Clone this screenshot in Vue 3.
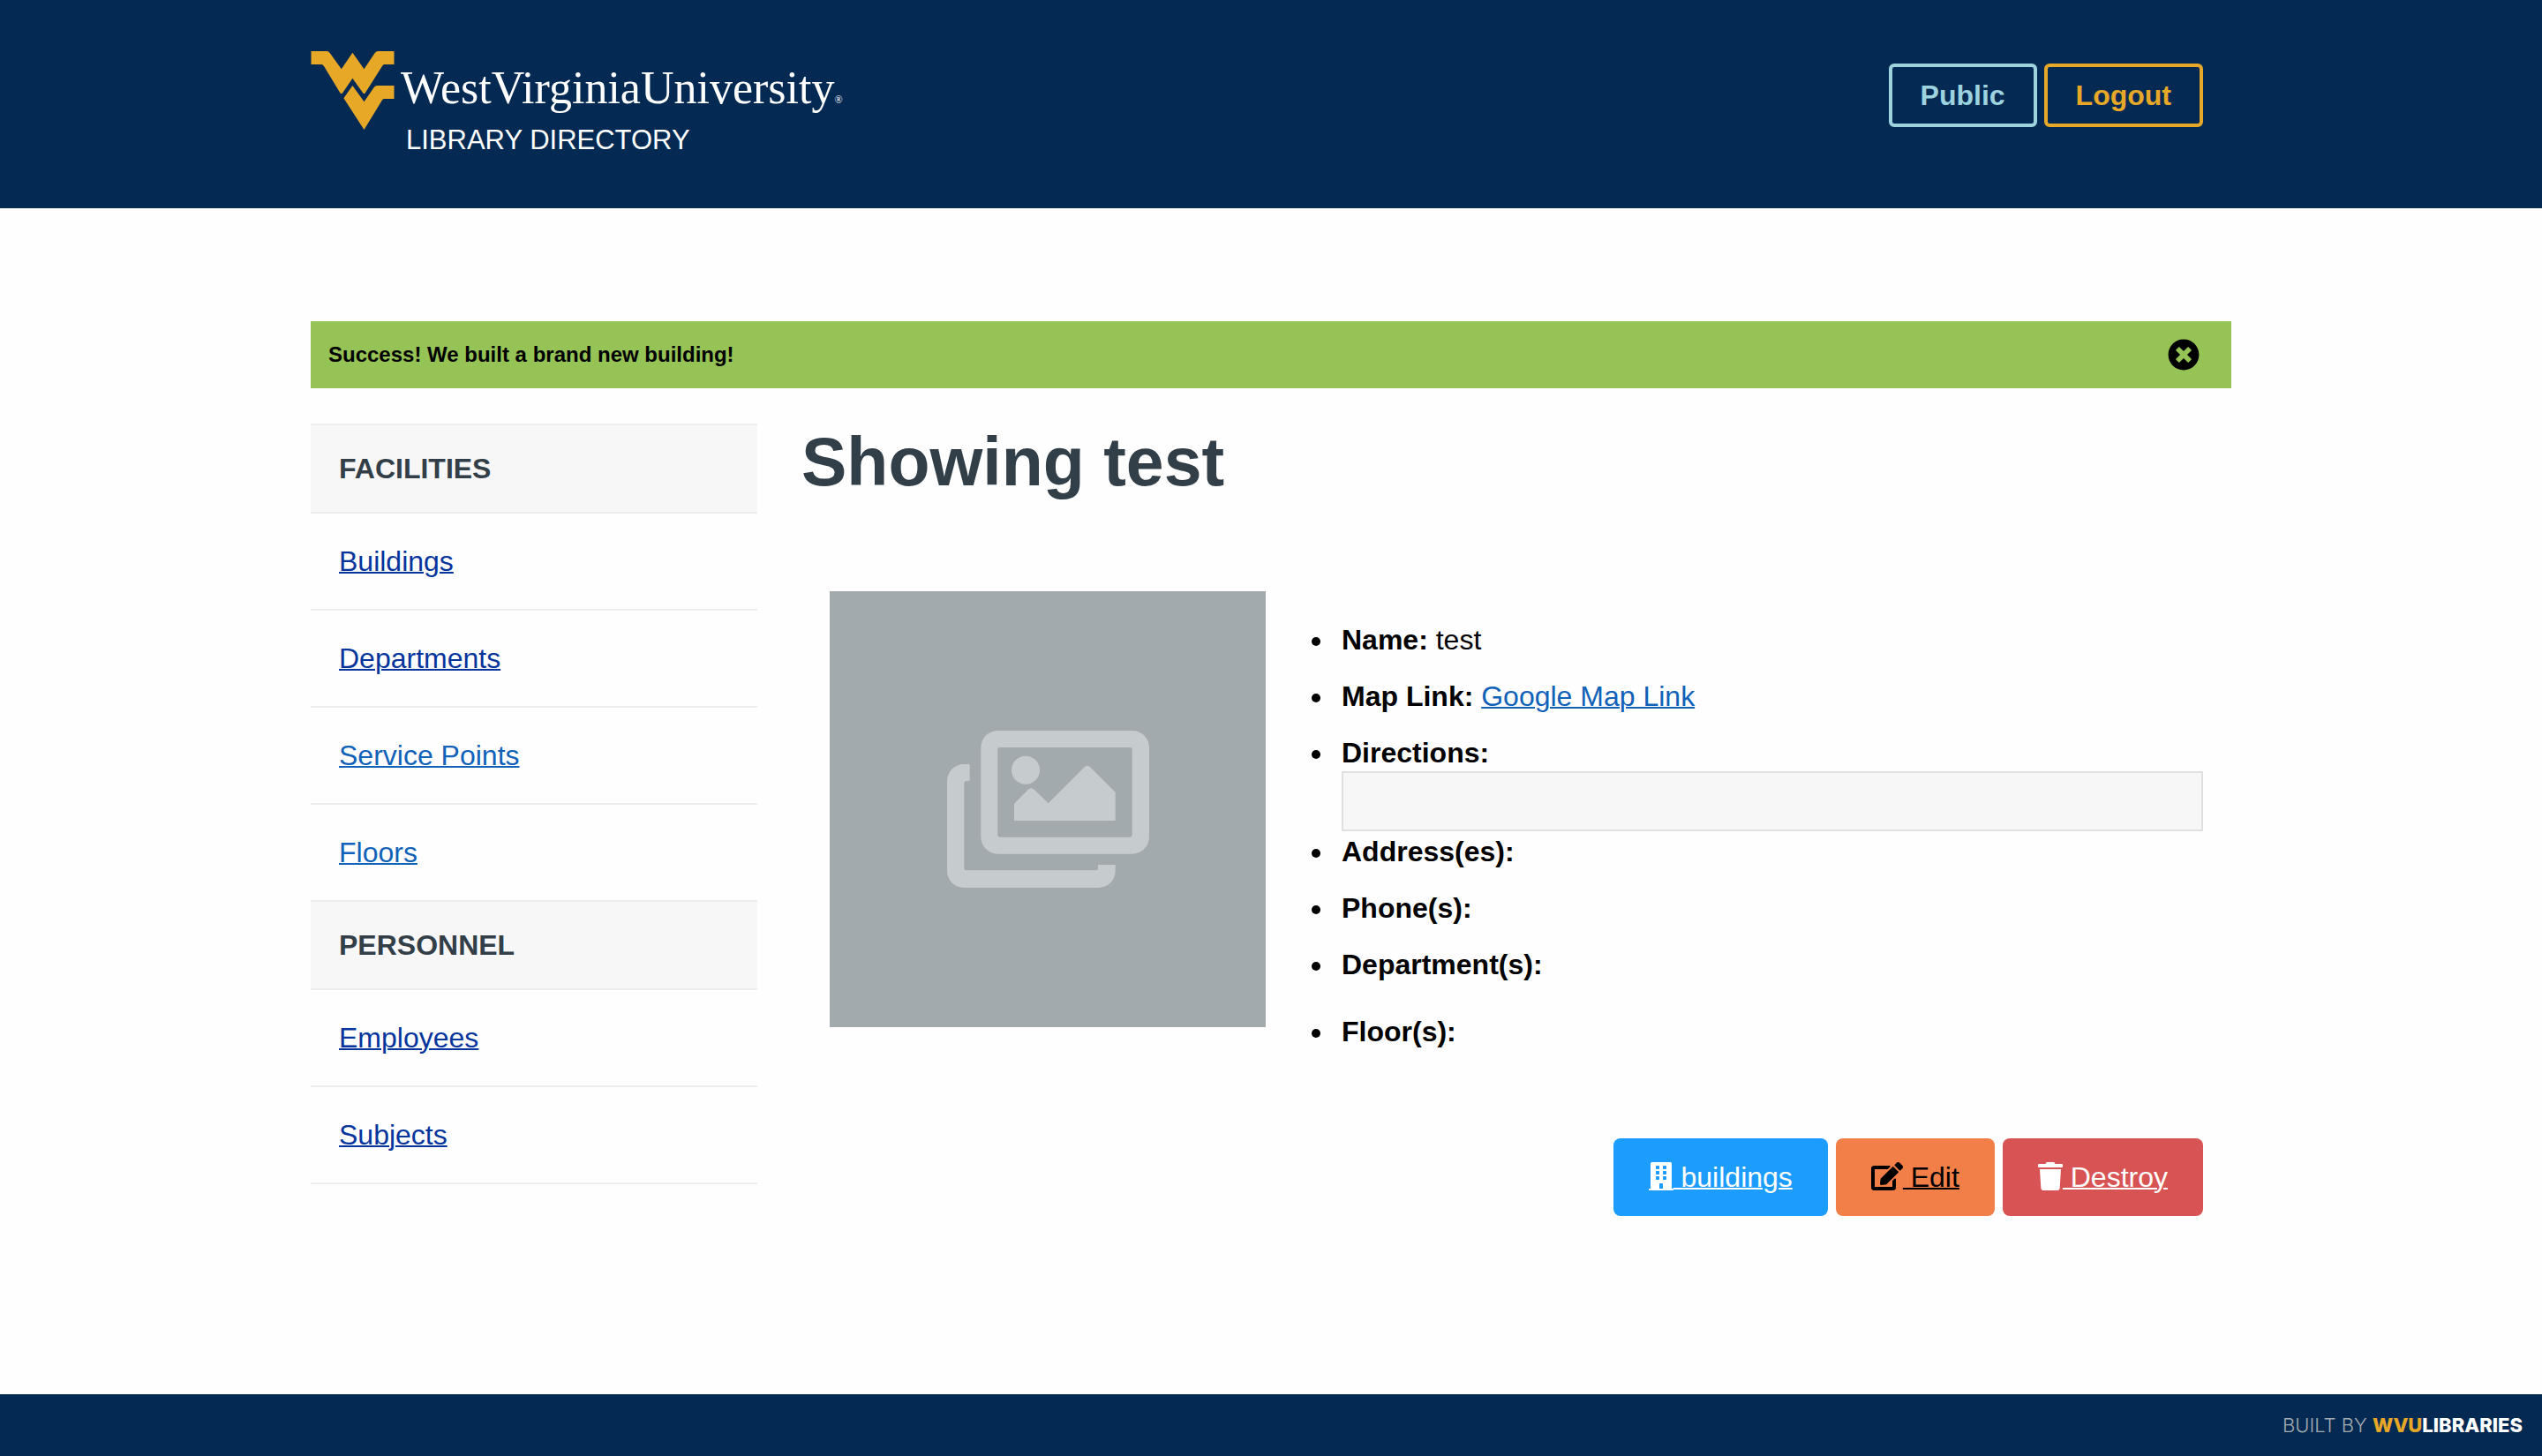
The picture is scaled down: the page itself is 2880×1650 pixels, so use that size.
<script setup>
import { ref } from 'vue'

const showAlert = ref(true)
const directions = ref('')

const sections = [
  {
    title: 'FACILITIES',
    links: [
      { label: 'Buildings', visited: true },
      { label: 'Departments', visited: true },
      { label: 'Service Points', visited: false },
      { label: 'Floors', visited: false }
    ]
  },
  {
    title: 'PERSONNEL',
    links: [
      { label: 'Employees', visited: true },
      { label: 'Subjects', visited: true }
    ]
  }
]

const windowXs = [128, 256]
const windowYs = [64, 160, 256]
</script>

<template>
  <div class="page">
    <header class="masthead">
      <div class="container masthead-inner">
        <a class="brand" href="#">
          <svg class="brand-mark" viewBox="0 0 94 89" aria-hidden="true">
            <path d="M0 0H17.500Q20 0 21.200 2L34.300 20.300 46.900 1.700 60 20.300 72.200 2Q73.500 0 76 0H94V15H83Q81.500 15 80.800 16.500L61.200 47.500Q60 49 58.800 47.500L46.900 30.700 35.500 47.500Q34.300 49 33 47.500L14.500 17Q13.500 15 11.500 15H0Z" />
            <path d="M46.900 39L60 57.300 71.400 40.700Q72.500 39 75 39H94V54H83Q81.500 54 80.600 55.300L60 89 36.900 53.300Z" />
          </svg>
          <span class="brand-text">
            <span class="wordmark">WestVirginiaUniversity<span class="reg">®</span></span>
            <span class="site-name">LIBRARY DIRECTORY</span>
          </span>
        </a>
        <div class="account">
          <button type="button" class="outline public">Public</button>
          <button type="button" class="outline logout">Logout</button>
        </div>
      </div>
    </header>

    <div class="container body">
      <div v-if="showAlert" class="alert" role="status">
        <strong>Success! We built a brand new building!</strong>
        <button type="button" class="close" aria-label="Close" @click="showAlert = false">
          <svg viewBox="0 0 512 512" aria-hidden="true">
            <path d="M256 8C119 8 8 119 8 256s111 248 248 248 248-111 248-248S393 8 256 8zm121.600 313.100c4.700 4.700 4.700 12.300 0 17L338 377.600c-4.700 4.700-12.300 4.700-17 0L256 312l-65.100 65.600c-4.700 4.700-12.300 4.700-17 0L134.400 338c-4.700-4.700-4.700-12.300 0-17l65.600-65-65.600-65.100c-4.700-4.700-4.700-12.300 0-17l39.600-39.600c4.700-4.700 12.300-4.700 17 0l65 65.700 65.100-65.600c4.700-4.700 12.300-4.700 17 0l39.600 39.600c4.700 4.700 4.700 12.300 0 17L312 256l65.600 65.100z" />
          </svg>
        </button>
      </div>

      <div class="columns">
        <nav class="sidebar">
          <section v-for="section in sections" :key="section.title">
            <h2>{{ section.title }}</h2>
            <ul>
              <li v-for="link in section.links" :key="link.label">
                <a href="#" :class="{ visited: link.visited }">{{ link.label }}</a>
              </li>
            </ul>
          </section>
        </nav>

        <main>
          <h1>Showing test</h1>
          <div class="record">
            <div class="photo">
              <svg viewBox="98 84 687 534" aria-hidden="true">
                <path fill-rule="evenodd" d="M270 84H728A57 57 0 0 1 785 141V446A57 57 0 0 1 728 503H270A57 57 0 0 1 213 446V141A57 57 0 0 1 270 84ZM277 141Q270 141 270 148V439Q270 446 277 446H720Q727 446 727 439V148Q727 141 720 141Z" />
                <path d="M175 198V255H163Q156 255 156 262V552Q156 559 163 559H604Q611 559 611 552V540H670V561A57 57 0 0 1 613 618H155A57 57 0 0 1 98 561V255A57 57 0 0 1 155 198Z" />
                <circle cx="365" cy="218" r="48" />
                <path d="M326 390V332L374 284Q384 275 394 284L442 331 565 208Q574 199 584 208L670 293V390Z" />
              </svg>
            </div>
            <ul class="details">
              <li><strong>Name:</strong> test</li>
              <li><strong>Map Link:</strong> <a href="#">Google Map Link</a></li>
              <li class="with-field">
                <label for="directions">Directions:</label>
                <input id="directions" v-model="directions" type="text" readonly />
              </li>
              <li><strong>Address(es):</strong></li>
              <li><strong>Phone(s):</strong></li>
              <li class="group-end"><strong>Department(s):</strong></li>
              <li><strong>Floor(s):</strong></li>
            </ul>
          </div>
          <div class="actions">
            <a class="btn info" href="#"><svg width="28" height="32" viewBox="0 0 448 512" aria-hidden="true">
              <path d="M436 480H416V24A24 24 0 0 0 392 0H56A24 24 0 0 0 32 24V480H12A12 12 0 0 0 0 492V512H448V492A12 12 0 0 0 436 480Z" />
              <template v-for="y in windowYs" :key="y">
                <rect v-for="x in windowXs" :key="x" class="pane" :x="x" :y="y" width="64" height="64" rx="12" />
              </template>
              <path class="pane" d="M192 480V396A12 12 0 0 1 204 384H244A12 12 0 0 1 256 396V480Z" />
            </svg> buildings</a>
            <a class="btn warning" href="#"><svg width="36" height="32" viewBox="0 0 576 512" aria-hidden="true">
              <path d="M402.600 83.200l90.200 90.200c3.800 3.800 3.800 10 0 13.800L274.400 405.600l-92.800 10.300c-12.400 1.400-22.900-9.100-21.500-21.500l10.300-92.800L388.800 83.200c3.800-3.800 10-3.800 13.800 0zm162-22.900l-48.800-48.800c-15.200-15.200-39.900-15.200-55.200 0l-35.400 35.400c-3.800 3.800-3.800 10 0 13.800l90.200 90.200c3.800 3.800 10 3.800 13.800 0l35.400-35.400c15.200-15.300 15.200-40 0-55.200zM384 346.200V448H64V128h229.800c3.200 0 6.200-1.300 8.500-3.500l40-40c7.600-7.600 2.200-20.500-8.500-20.500H48C21.500 64 0 85.500 0 112v352c0 26.500 21.500 48 48 48h352c26.500 0 48-21.500 48-48V306.200c0-10.700-12.900-16-20.500-8.500l-40 40c-2.200 2.300-3.500 5.300-3.500 8.500z" />
            </svg> Edit</a>
            <a class="btn danger" href="#"><svg width="28" height="32" viewBox="0 0 448 512" aria-hidden="true">
              <path d="M432 32H312l-9.400-18.700A24 24 0 0 0 281.100 0H166.800a23.720 23.720 0 0 0-21.400 13.300L136 32H16A16 16 0 0 0 0 48v32a16 16 0 0 0 16 16h416a16 16 0 0 0 16-16V48a16 16 0 0 0-16-16zM53.200 467a48 48 0 0 0 47.900 45h245.800a48 48 0 0 0 47.900-45L416 128H32z" />
            </svg> Destroy</a>
          </div>
        </main>
      </div>
    </div>

    <footer>BUILT BY <a href="#"><span>WVU</span>LIBRARIES</a></footer>
  </div>
</template>

<style>
body {
  margin: 0;
  background: #fefefe;
}
</style>

<style scoped>
.page {
  display: flex;
  flex-direction: column;
  min-height: 100vh;
  font: 32px/42px "Liberation Sans", Arial, sans-serif;
  color: #000;
}
.container {
  box-sizing: border-box;
  width: 100%;
  max-width: 2176px;
  margin: 0 auto;
}
.masthead {
  background: #042a54;
}
.masthead-inner {
  display: flex;
  justify-content: space-between;
  align-items: flex-start;
  padding: 58px 32px 60px 0;
}
.brand {
  display: flex;
  gap: 7px;
  color: #fff;
  text-decoration: none;
}
.brand-mark {
  width: 95px;
  height: 89px;
  fill: #e8a827;
}
.brand-text {
  display: flex;
  flex-direction: column;
}
.wordmark {
  font-family: "Liberation Serif", "Times New Roman", serif;
  font-size: 52px;
  line-height: 84px;
}
.reg {
  font-size: 12px;
  line-height: 12px;
}
.site-name {
  padding-left: 6px;
  font-size: 31px;
  line-height: 34px;
}
.account {
  display: flex;
  gap: 8px;
  padding-top: 14px;
}
.outline {
  height: 72px;
  padding: 0 32px;
  border: 4px solid;
  border-radius: 6px;
  background: transparent;
  font: bold 32px/42px "Liberation Sans", Arial, sans-serif;
}
.public {
  color: #9cd3de;
}
.logout {
  color: #e8a827;
}
.body {
  padding: 128px 0 200px;
}
.alert {
  display: flex;
  justify-content: space-between;
  align-items: center;
  height: 76px;
  margin-bottom: 40px;
  padding: 0 36px 0 20px;
  background: #96c355;
  font-size: 24px;
}
.close {
  display: flex;
  padding: 0;
  border: 0;
  background: none;
}
.close svg {
  width: 36px;
  height: 36px;
}
.columns {
  display: grid;
  grid-template-columns: 506px minmax(0, 1fr);
  gap: 50px;
  align-items: start;
}
.sidebar {
  border-top: 2px solid #ededee;
}
.sidebar h2 {
  margin: 0;
  padding: 28px 32px;
  border-bottom: 2px solid #ededee;
  background: #f7f7f7;
  color: #323e48;
  font-size: 32px;
  line-height: 42px;
}
.sidebar ul {
  margin: 0;
  padding: 0;
  list-style: none;
}
.sidebar li {
  padding: 33px 32px;
  border-bottom: 2px solid #ededee;
}
a {
  color: #1062b8;
  text-decoration-thickness: 2px;
}
a.visited {
  color: #05359c;
}
main {
  padding-right: 32px;
}
h1 {
  margin: 0 0 104px;
  color: #323e48;
  font-size: 77px;
  line-height: 86px;
}
.record {
  display: flex;
  align-items: flex-start;
  gap: 36px;
  padding-left: 32px;
}
.photo {
  display: flex;
  flex: none;
  align-items: center;
  justify-content: center;
  width: 494px;
  height: 494px;
  background: #a2aaad;
}
.photo svg {
  width: 229px;
  height: 178px;
  fill: #c6cbce;
}
.details {
  flex: 1;
  margin: 0;
  padding: 34px 0 0 42px;
}
.details li {
  margin-bottom: 22px;
  padding-left: 8px;
}
.details .with-field {
  margin-bottom: 2px;
}
.details .group-end {
  margin-bottom: 34px;
}
.details li:last-child {
  margin-bottom: 0;
}
label {
  display: block;
  font-weight: bold;
}
input {
  display: block;
  box-sizing: border-box;
  width: 100%;
  height: 68px;
  padding: 0 16px;
  border: 2px solid #dfe1e1;
  background: #f7f7f7;
  font: inherit;
}
.actions {
  display: flex;
  justify-content: flex-end;
  gap: 9px;
  margin-top: 100px;
}
.btn {
  padding: 23px 40px;
  border-radius: 8px;
}
.btn svg {
  vertical-align: -4px;
  fill: currentColor;
}
.info {
  background: #1c9dfd;
  color: #fff;
}
.info .pane {
  fill: #1c9dfd;
}
.warning {
  background: #f27e48;
  color: #000;
}
.danger {
  background: #d85353;
  color: #fff;
}
footer {
  margin-top: auto;
  padding: 14px 22px;
  background: #042a54;
  color: #a2aaad;
  font: 300 22px/42px Inter, sans-serif;
  text-align: right;
}
footer a {
  color: #fff;
  font-weight: 800;
  text-decoration: none;
}
footer span {
  color: #e8a827;
}
</style>
